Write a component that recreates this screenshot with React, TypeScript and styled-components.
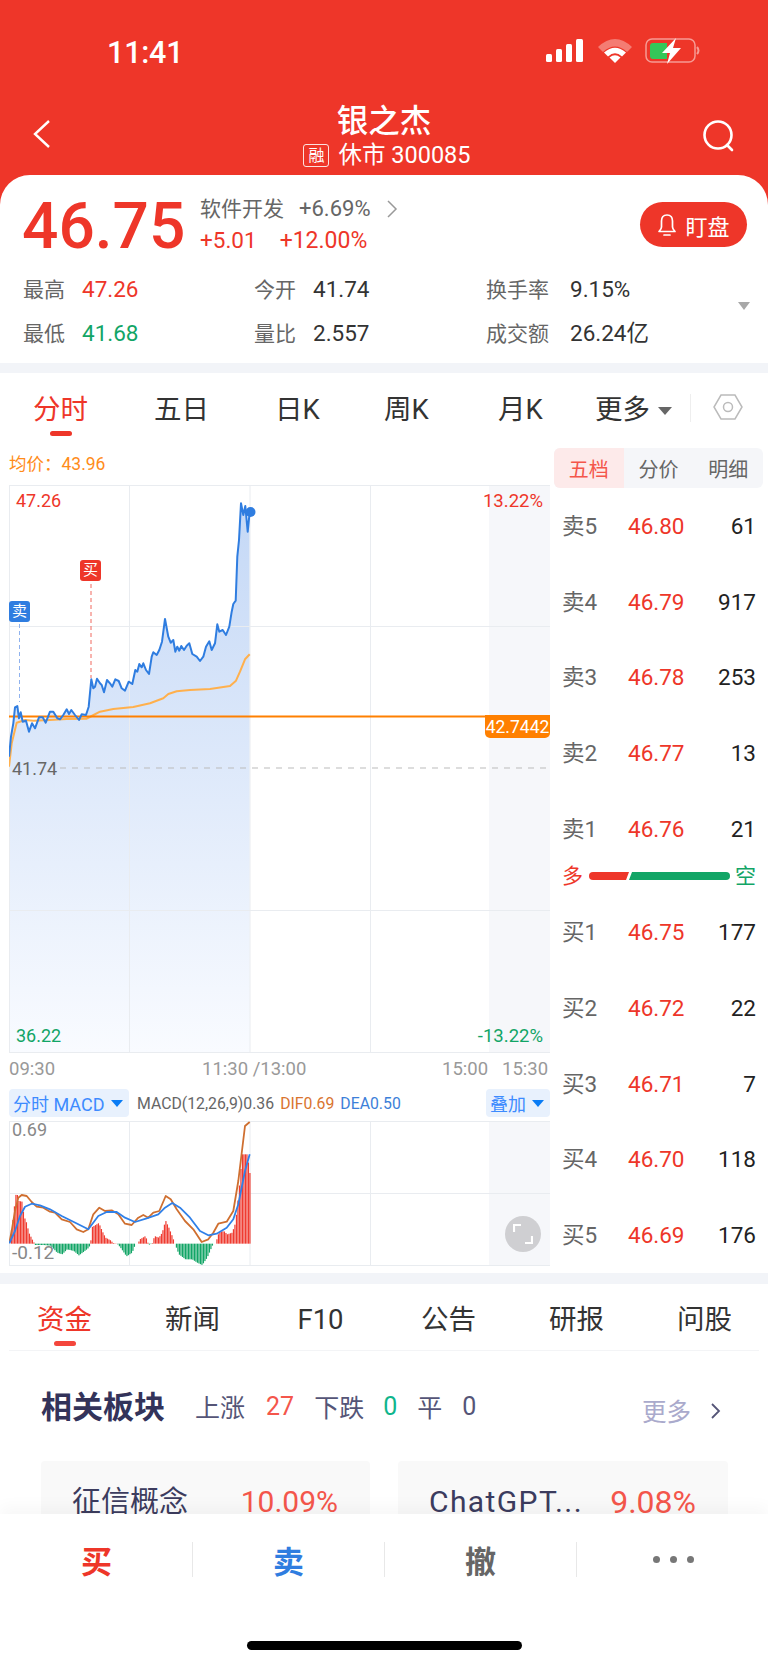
import styled, { createGlobalStyle } from 'styled-components';

const RED = '#ee3629';
const GREEN = '#12a566';
const BLUE = '#2f7de0';
const ORANGE = '#ff8000';
const GRID = '#e9ecf0';

const GlobalStyle = createGlobalStyle`
  html, body {
    margin: 0;
    padding: 0;
    background: #fff;
  }
  body {
    font-family: Roboto, "Noto Sans CJK SC", sans-serif;
  }
`;

const Page = styled.div`
  position: relative;
  width: 768px;
  height: 1665px;
  overflow: hidden;
  background: #fff;
`;

const TopSection = styled.div`
  background: ${RED};
`;

const StatusBar = styled.div`
  height: 103px;
  padding: 38px 68px 0 107px;
  box-sizing: border-box;
  display: flex;
  justify-content: space-between;
  align-items: flex-start;
`;

const Clock = styled.div`
  color: #fff;
  font-size: 30.5px;
  line-height: 29px;
  font-weight: 500;
  letter-spacing: -0.2px;
`;

const Nav = styled.div`
  height: 72px;
  padding: 0 32px;
  display: flex;
  justify-content: space-between;
  align-items: flex-start;
`;

const NavIcon = styled.svg`
  margin-top: 16px;
  display: block;
`;

const NavTitle = styled.div`
  display: flex;
  flex-direction: column;
  align-items: center;
  color: #fff;
`;

const StockName = styled.div`
  font-size: 31.5px;
  line-height: 36px;
  font-weight: 500;
  margin-top: 1px;
`;

const StockSub = styled.div`
  display: flex;
  align-items: center;
  gap: 9px;
  margin-left: 6px;
  font-size: 23.5px;
  line-height: 31px;
`;

const MarginBadge = styled.span`
  width: 24px;
  height: 21px;
  border: 1px solid rgba(255, 255, 255, 0.85);
  border-radius: 3px;
  font-size: 16px;
  line-height: 21px;
  text-align: center;
`;

const QuoteCard = styled.div`
  height: 188px;
  box-sizing: border-box;
  background: #fff;
  border-radius: 30px 30px 0 0;
  padding: 19px 21px 0 23px;
  position: relative;
`;

const QuoteTop = styled.div`
  display: flex;
  align-items: flex-start;
`;

const BigPrice = styled.div`
  width: 178px;
  color: ${RED};
  font-size: 64px;
  line-height: 64px;
  font-weight: 500;
  margin-left: -1px;
  margin-top: 1px;
`;

const QuoteMeta = styled.div`
  flex: 1;
  display: flex;
  flex-direction: column;
  gap: 6px;
  padding-top: 2px;
`;

const MetaRow = styled.div<{ $red?: boolean; $gap: number }>`
  display: flex;
  align-items: baseline;
  gap: ${(p) => p.$gap}px;
  font-size: 21px;
  line-height: 25px;
  color: ${(p) => (p.$red ? RED : '#666')};
`;

const MetaFigure = styled.span<{ $size: number }>`
  font-size: ${(p) => p.$size}px;
`;

const MetaChevron = styled.svg`
  align-self: center;
`;

const WatchButton = styled.div`
  width: 107px;
  height: 45px;
  margin-top: 8px;
  border-radius: 23px;
  background: ${RED};
  color: #fff;
  font-size: 22px;
  display: flex;
  align-items: center;
  justify-content: center;
  gap: 8px;
`;

const StatsGrid = styled.div`
  display: grid;
  grid-template-columns: 231px 232px 1fr;
  grid-auto-rows: 43.5px;
  margin-top: 15px;
`;

const Stat = styled.div`
  display: flex;
  align-items: baseline;
  font-size: 21px;
  line-height: 30px;
`;

const StatLabel = styled.span<{ $wide?: boolean }>`
  width: ${(p) => (p.$wide ? 84 : 59)}px;
  color: #666;
`;

const StatValue = styled.span<{ $color?: string }>`
  color: ${(p) => p.$color ?? '#333'};
  font-size: 22.5px;
`;

const ExpandArrow = styled.div`
  position: absolute;
  right: 18px;
  top: 127px;
  width: 0;
  height: 0;
  border-left: 6px solid transparent;
  border-right: 6px solid transparent;
  border-top: 8px solid #a8a8a8;
`;

const GapBand = styled.div<{ $height: number }>`
  height: ${(p) => p.$height}px;
  background: #f2f4f8;
`;

const PeriodTabs = styled.div`
  height: 67px;
  padding-left: 33px;
  display: grid;
  grid-template-columns: 121px 121px 109px 114px 97px 95px 1fr;
  align-items: start;
`;

const PeriodTab = styled.div<{ $active?: boolean }>`
  position: relative;
  margin-top: 20px;
  font-size: 27.5px;
  line-height: 34px;
  width: fit-content;
  color: ${(p) => (p.$active ? RED : '#333')};
  display: flex;
  align-items: center;
  &::after {
    content: '';
    display: ${(p) => (p.$active ? 'block' : 'none')};
    position: absolute;
    left: 17px;
    top: 38px;
    width: 22px;
    height: 5px;
    border-radius: 3px;
    background: ${RED};
  }
`;

const MoreCaret = styled.span`
  margin-left: 8px;
  margin-top: 2px;
  width: 0;
  height: 0;
  border-left: 7px solid transparent;
  border-right: 7px solid transparent;
  border-top: 8px solid #666;
`;

const SettingsSlot = styled.div`
  margin-top: 21px;
  height: 28px;
  border-left: 1px solid #eee;
  padding-left: 22px;
`;

const MainGrid = styled.div`
  display: grid;
  grid-template-columns: 550px 218px;
  height: 833px;
`;

const LeftColumn = styled.div`
  padding-left: 9px;
`;

const AvgLine = styled.div`
  height: 45px;
  display: flex;
  align-items: center;
  color: #ff8c1a;
  font-size: 17.5px;
  padding-left: 0;
`;

const ChartBox = styled.div<{ $height: number }>`
  position: relative;
  width: 541px;
  height: ${(p) => p.$height}px;
  svg {
    display: block;
  }
`;

const AxisLabel = styled.div<{ $x?: number; $rightX?: number; $y: number; $color: string; $size?: number }>`
  position: absolute;
  ${(p) => (p.$x !== undefined ? `left: ${p.$x}px;` : '')}
  ${(p) => (p.$rightX !== undefined ? `right: ${p.$rightX}px;` : '')}
  top: ${(p) => p.$y}px;
  color: ${(p) => p.$color};
  font-size: ${(p) => p.$size ?? 18}px;
  line-height: 20px;
`;

const Flag = styled.div<{ $x: number; $y: number; $bg: string }>`
  position: absolute;
  left: ${(p) => p.$x}px;
  top: ${(p) => p.$y}px;
  width: 21px;
  height: 21px;
  border-radius: 3px;
  background: ${(p) => p.$bg};
  color: #fff;
  font-size: 15px;
  line-height: 21px;
  text-align: center;
`;

const PriceTag = styled.div`
  position: absolute;
  right: 0;
  top: 230px;
  width: 65px;
  height: 23px;
  background: ${ORANGE};
  border-radius: 0 0 5px 5px;
  color: #fff;
  font-size: 17.5px;
  line-height: 24px;
  text-align: center;
`;

const TimeAxis = styled.div`
  height: 36px;
  padding: 0 0 5px 0;
  box-sizing: border-box;
  display: grid;
  grid-template-columns: 193px 240px 60px auto;
  align-items: center;
  color: #999;
  font-size: 18.5px;
`;

const MacdBar = styled.div`
  height: 28px;
  display: flex;
  align-items: center;
  margin-bottom: 4px;
  width: 541px;
  font-size: 15.8px;
  color: #666;
  white-space: nowrap;
`;

const MacdPill = styled.div<{ $width: number }>`
  width: ${(p) => p.$width}px;
  height: 28px;
  box-sizing: border-box;
  padding-left: 4px;
  border-radius: 4px;
  background: #e8f1fd;
  color: #3d8bff;
  font-size: 18px;
  display: flex;
  align-items: center;
  gap: 6px;
`;

const PillCaret = styled.span`
  width: 0;
  height: 0;
  border-left: 6px solid transparent;
  border-right: 6px solid transparent;
  border-top: 7px solid #0a7cf5;
`;

const MacdValue = styled.span<{ $color?: string; $left: number }>`
  margin-left: ${(p) => p.$left}px;
  color: ${(p) => p.$color ?? '#666'};
`;

const PushRight = styled.div`
  margin-left: auto;
`;

const ExpandButton = styled.div`
  position: absolute;
  left: 496px;
  top: 95px;
  width: 36px;
  height: 36px;
  border-radius: 50%;
  background: #cfcfd2;
  display: flex;
  align-items: center;
  justify-content: center;
`;

const RightColumn = styled.div`
  padding: 8px 0 0 4px;
`;

const BookTabs = styled.div`
  width: 209px;
  height: 40px;
  display: flex;
  border-radius: 6px;
  overflow: hidden;
  background: #f5f6f9;
  font-size: 20px;
`;

const BookTab = styled.div<{ $active?: boolean }>`
  flex: 1;
  display: flex;
  align-items: center;
  justify-content: center;
  color: ${(p) => (p.$active ? '#f4564b' : '#666')};
  background: ${(p) => (p.$active ? '#fdeaea' : 'transparent')};
`;

const Book = styled.div`
  padding: 0 12px 0 8px;
`;

const BookRow = styled.div`
  height: 75.7px;
  display: grid;
  grid-template-columns: 66px 1fr auto;
  align-content: center;
  align-items: baseline;
  font-size: 22.5px;
  line-height: 30px;
`;

const BookLabel = styled.span`
  color: #666;
  font-size: 22.5px;
`;

const BookPrice = styled.span`
  color: ${RED};
`;

const BookQty = styled.span`
  color: #222;
`;

const Balance = styled.div`
  height: 28px;
  display: flex;
  align-items: center;
  justify-content: space-between;
  font-size: 21px;
  line-height: 21px;
  margin-top: -4px;
  margin-bottom: 4px;
`;

const BalanceSide = styled.span<{ $color: string }>`
  color: ${(p) => p.$color};
`;

const BalanceTrack = styled.svg`
  display: block;
`;

const NewsTabs = styled.div`
  height: 67px;
  display: grid;
  grid-template-columns: repeat(6, 128px);
  padding-left: 0.5px;
  position: relative;
  &::after {
    content: '';
    position: absolute;
    left: 9px;
    right: 9px;
    bottom: 0;
    height: 1px;
    background: #f3f4f6;
  }
`;

const NewsTab = styled.div<{ $active?: boolean }>`
  position: relative;
  text-align: center;
  font-size: 27.5px;
  line-height: 36px;
  margin-top: 18px;
  height: 36px;
  color: ${(p) => (p.$active ? RED : '#333')};
  &::after {
    content: '';
    display: ${(p) => (p.$active ? 'block' : 'none')};
    position: absolute;
    left: 53px;
    top: 39px;
    width: 22px;
    height: 5px;
    border-radius: 3px;
    background: #f4463c;
  }
`;

const SectorHead = styled.div`
  margin-top: 38px;
  padding: 0 47px 0 41px;
  height: 34px;
  display: flex;
  align-items: center;
`;

const SectorTitle = styled.div`
  font-size: 31px;
  font-weight: 700;
  color: #33335a;
  margin-right: 30px;
  margin-top: -3px;
`;

const Count = styled.span<{ $color?: string; $left: number }>`
  margin-left: ${(p) => p.$left}px;
  font-size: 25px;
  color: ${(p) => p.$color ?? '#555577'};
`;

const SectorMore = styled.div`
  margin-left: auto;
  display: flex;
  align-items: center;
  gap: 18px;
  color: #aaaacc;
  font-size: 24.5px;
  padding-top: 9px;
`;

const SectorCards = styled.div`
  margin-top: 38px;
  padding: 0 40px 0 41px;
  display: grid;
  grid-template-columns: 329px 330px;
  gap: 28px;
`;

const SectorCard = styled.div`
  height: 110px;
  box-sizing: border-box;
  padding: 22px 32px 0 31px;
  background: #f9f9f9;
  border-radius: 4px;
  display: flex;
  justify-content: space-between;
  font-size: 29px;
  line-height: 38px;
  color: #3c3c5e;
`;

const SectorName = styled.span<{ $latin?: boolean }>`
  ${(p) => (p.$latin ? 'font-size: 30px; letter-spacing: 1.4px;' : '')}
`;

const SectorPct = styled.span<{ $size: number }>`
  color: #f4564b;
  font-size: ${(p) => p.$size}px;
`;

const BottomBar = styled.div`
  position: absolute;
  left: 0;
  right: 0;
  bottom: 0;
  height: 151px;
  background: #fff;
  box-shadow: 0 -8px 14px rgba(0, 0, 0, 0.03);
`;

const Actions = styled.div`
  display: grid;
  grid-template-columns: repeat(4, 192px);
  margin-top: 28px;
  padding-left: 1px;
`;

const Action = styled.div<{ $color: string; $last?: boolean }>`
  height: 35px;
  display: flex;
  align-items: center;
  justify-content: center;
  color: ${(p) => p.$color};
  font-size: 31px;
  font-weight: 700;
  border-right: ${(p) => (p.$last ? 'none' : '1px solid #e8e8e8')};
`;

const Dots = styled.div`
  display: flex;
  gap: 10px;
  margin-top: -1px;
`;

const Dot = styled.span`
  width: 7px;
  height: 7px;
  border-radius: 50%;
  background: #777;
`;

const HomeIndicator = styled.div`
  position: absolute;
  left: 247px;
  top: 127px;
  width: 275px;
  height: 9px;
  border-radius: 5px;
  background: #000;
`;

// points are read off the reference crops, 3x the page scale
type Pt = [number, number];

const priceLine: Pt[] = [
  [27, 830], [33, 770], [40, 730], [45, 682], [52, 678], [57, 715], [62, 697], [68, 725], [78, 722], [87, 755],
  [96, 730], [105, 745], [117, 712], [128, 712], [137, 728], [150, 695], [160, 695], [172, 715], [180, 718],
  [190, 705], [200, 688], [207, 702], [214, 690], [225, 705], [237, 720], [245, 703], [258, 705], [266, 680],
  [274, 598], [280, 625], [285, 620], [291, 596], [300, 610], [305, 615], [312, 637], [321, 600], [330, 610],
  [337, 620], [346, 598], [356, 603], [365, 625], [375, 632], [386, 605], [397, 612], [406, 570], [412, 575],
  [418, 552], [425, 562], [430, 550], [438, 570], [447, 582], [455, 530], [460, 517], [470, 525], [478, 510],
  [486, 485], [495, 417], [505, 470], [512, 488], [520, 480], [526, 515], [532, 500], [538, 512], [544, 498],
  [552, 510], [560, 497], [568, 490], [577, 522], [590, 530], [600, 543], [610, 530], [618, 500], [628, 484],
  [635, 510], [645, 490], [652, 433], [658, 455], [668, 450], [678, 465], [688, 440], [695, 395], [700, 372],
  [707, 362], [712, 230], [717, 180], [723, 70], [730, 105], [736, 78], [743, 155], [749, 96],
];

const avgLine: Pt[] = [
  [27, 860], [35, 790], [50, 728], [75, 720], [100, 722], [150, 720], [200, 717], [260, 716], [275, 708],
  [300, 695], [340, 687], [400, 681], [450, 670], [490, 655], [505, 642], [530, 634], [570, 630], [630, 627],
  [690, 618], [708, 602], [720, 575], [735, 538], [749, 523],
];

const macdHist: Pt[] = [
  [28, 608], [32, 570], [38, 530], [45, 462], [50, 460], [55, 480], [65, 482], [70, 525], [78, 545], [85, 575],
  [95, 595], [102, 608], [103, 612], [130, 612], [150, 614], [170, 635], [185, 640], [200, 625], [220, 630],
  [235, 643], [250, 632], [265, 620], [270, 608], [275, 558], [295, 546], [305, 570], [315, 590], [330, 598],
  [338, 606], [350, 608], [360, 620], [378, 646], [395, 635], [405, 608], [412, 608], [418, 595], [435, 585],
  [443, 608], [448, 612], [452, 608], [455, 608], [462, 585], [475, 590], [485, 575], [495, 538], [505, 560],
  [515, 585], [523, 608], [535, 640], [555, 655], [575, 655], [590, 665], [605, 672], [620, 650], [638, 608],
  [645, 608], [655, 575], [670, 570], [680, 580], [695, 575], [705, 545], [715, 450], [725, 340], [740, 340],
  [750, 410],
];

const difLine: Pt[] = [
  [28, 605], [35, 570], [45, 510], [55, 470], [65, 462], [80, 465], [95, 483], [110, 497], [130, 500], [150, 512],
  [165, 515], [185, 535], [210, 543], [230, 565], [250, 573], [265, 565], [280, 520], [298, 500], [315, 510],
  [335, 508], [355, 520], [375, 548], [395, 552], [415, 530], [430, 522], [445, 530], [460, 515], [478, 510],
  [497, 465], [512, 475], [530, 505], [555, 540], [580, 565], [605, 603], [625, 595], [640, 575], [655, 548],
  [680, 542], [700, 510], [715, 420], [735, 255], [749, 243],
];

const deaLine: Pt[] = [
  [28, 607], [45, 570], [60, 525], [75, 497], [95, 488], [120, 493], [150, 505], [185, 525], [220, 542], [265, 565],
  [295, 525], [320, 513], [350, 513], [375, 530], [405, 543], [440, 532], [475, 520], [495, 500], [517, 486],
  [540, 500], [570, 530], [600, 570], [625, 583], [650, 578], [680, 560], [700, 535], [715, 490], [735, 390],
  [749, 340],
];

const toSvg = (pts: Pt[], offsetY: number) =>
  pts.map(([x, y]) => `${(x / 3).toFixed(1)},${(y / 3 + offsetY).toFixed(1)}`).join(' ');

function histAt(x: number) {
  for (let i = 1; i < macdHist.length; i++) {
    const [x0, y0] = macdHist[i - 1];
    const [x1, y1] = macdHist[i];
    if (x <= x1) {
      return y0 + ((y1 - y0) * (x - x0)) / (x1 - x0 || 1);
    }
  }
  return 608;
}

function PriceChart() {
  const area = `9,768 ${toSvg(priceLine, 480)} 249.7,1052 9,1052`;
  return (
    <svg width="541" height="568" viewBox="9 485 541 568">
      <defs>
        <linearGradient id="priceFill" gradientUnits="userSpaceOnUse" x1="0" y1="500" x2="0" y2="1052">
          <stop offset="0" stopColor="#c4d8f6" />
          <stop offset="1" stopColor="#f9fbff" />
        </linearGradient>
      </defs>
      <rect x="489" y="485" width="61" height="568" fill="#f6f7fa" />
      <polygon points={area} fill="url(#priceFill)" />
      {[485.5, 626.5, 910.5, 1052.5].map((y) => (
        <line key={y} x1="9" x2="550" y1={y} y2={y} stroke={GRID} />
      ))}
      {[9.5, 129.5, 250, 370.5].map((x) => (
        <line key={x} x1={x} x2={x} y1="485" y2="1053" stroke={GRID} />
      ))}
      <line x1="60" x2="550" y1="768" y2="768" stroke="#bbb" strokeDasharray="6 6" />
      <line x1="19.5" x2="19.5" y1="624" y2="702" stroke="#8fb2ee" strokeDasharray="4 3" />
      <line x1="91" x2="91" y1="584" y2="678" stroke="#f0685e" strokeDasharray="4 3" />
      <polyline points={toSvg(avgLine, 480)} fill="none" stroke="#ffb04d" strokeWidth="2" strokeLinejoin="round" />
      <line x1="9" x2="490" y1="716.5" y2="716.5" stroke={ORANGE} strokeWidth="2" />
      <polyline points={toSvg(priceLine, 480)} fill="none" stroke={BLUE} strokeWidth="2" strokeLinejoin="round" />
      <circle cx="250.5" cy="512" r="5" fill={BLUE} />
    </svg>
  );
}

function MacdChart() {
  const bars = [];
  for (let x = 28; x <= 750; x += 4.5) {
    const top = histAt(x);
    bars.push(
      <rect
        key={x}
        x={x / 3}
        y={Math.min(top, 608) / 3 + 1040}
        width="1.2"
        height={Math.abs(top - 608) / 3}
        fill={top < 608 ? '#ef3b30' : GREEN}
      />,
    );
  }
  return (
    <svg width="541" height="145" viewBox="9 1120 541 145">
      <rect x="489" y="1120" width="61" height="145" fill="#f6f7fa" />
      {[1120.5, 1192.5, 1264.5].map((y) => (
        <line key={y} x1="9" x2="550" y1={y} y2={y} stroke={GRID} />
      ))}
      {[9.5, 129.5, 250, 370.5].map((x) => (
        <line key={x} x1={x} x2={x} y1="1120" y2="1265" stroke={GRID} />
      ))}
      {bars}
      <polyline points={toSvg(difLine, 1040)} fill="none" stroke="#cf6f30" strokeWidth="1.8" strokeLinejoin="round" />
      <polyline points={toSvg(deaLine, 1040)} fill="none" stroke="#3080e8" strokeWidth="1.8" strokeLinejoin="round" />
    </svg>
  );
}

const sells = [
  ['卖5', '46.80', '61'],
  ['卖4', '46.79', '917'],
  ['卖3', '46.78', '253'],
  ['卖2', '46.77', '13'],
  ['卖1', '46.76', '21'],
];

const buys = [
  ['买1', '46.75', '177'],
  ['买2', '46.72', '22'],
  ['买3', '46.71', '7'],
  ['买4', '46.70', '118'],
  ['买5', '46.69', '176'],
];

function BookRows({ rows }: { rows: string[][] }) {
  return (
    <>
      {rows.map(([label, price, qty]) => (
        <BookRow key={label}>
          <BookLabel>{label}</BookLabel>
          <BookPrice>{price}</BookPrice>
          <BookQty>{qty}</BookQty>
        </BookRow>
      ))}
    </>
  );
}

function StatusIcons() {
  return (
    <svg width="154" height="26" viewBox="546 39 154 26">
      <rect x="546" y="55" width="6" height="8" rx="1.5" fill="#fff" />
      <rect x="556" y="50" width="6" height="13" rx="1.5" fill="#fff" />
      <rect x="566" y="45" width="6" height="18" rx="1.5" fill="#fff" />
      <rect x="576" y="40" width="7" height="23" rx="1.5" fill="#fff" />
      <path d="M598 48 Q615 32 632 48 L627 53 Q615 42 603 53 Z" fill="#fff" opacity="0.35" />
      <path d="M604 53.5 Q615 44 626 53.5 L622 57.5 Q615 51 608 57.5 Z" fill="#fff" />
      <path d="M609.5 58.5 Q615 54 620.5 58.5 L615 64 Z" fill="#fff" />
      <rect x="646" y="40" width="49" height="23" rx="6" fill="none" stroke="#fff" strokeOpacity="0.5" strokeWidth="1.5" />
      <path d="M650 47 a3 3 0 0 1 3 -3 H667 V60 H653 a3 3 0 0 1 -3 -3 Z" fill="#34c759" />
      <path d="M697 48 q3 3.5 0 7" fill="none" stroke="#fff" strokeOpacity="0.5" strokeWidth="2" />
      <path d="M676 39 L662 54 H670 L667 65 L681 49 H673 Z" fill="#fff" />
    </svg>
  );
}

function App() {
  return (
    <Page>
      <GlobalStyle />
      <TopSection>
        <StatusBar>
          <Clock>11:41</Clock>
          <StatusIcons />
        </StatusBar>
        <Nav>
          <NavIcon width="34" height="30" viewBox="0 0 34 30">
            <path d="M17 2 L3 15 L17 28" fill="none" stroke="#fff" strokeWidth="2.4" />
          </NavIcon>
          <NavTitle>
            <StockName>银之杰</StockName>
            <StockSub>
              <MarginBadge>融</MarginBadge>
              休市 300085
            </StockSub>
          </NavTitle>
          <NavIcon width="34" height="34" viewBox="0 0 34 34">
            <circle cx="16" cy="16" r="13.5" fill="none" stroke="#fff" strokeWidth="2.6" />
            <path d="M25 26 L30 31" stroke="#fff" strokeWidth="2.6" strokeLinecap="round" />
          </NavIcon>
        </Nav>
        <QuoteCard>
          <QuoteTop>
            <BigPrice>46.75</BigPrice>
            <QuoteMeta>
              <MetaRow $gap={15}>
                <span>软件开发</span>
                <MetaFigure $size={22}>+6.69%</MetaFigure>
                <MetaChevron width="12" height="18" viewBox="0 0 12 18">
                  <path d="M2 1 L10 9 L2 17" fill="none" stroke="#999" strokeWidth="1.5" />
                </MetaChevron>
              </MetaRow>
              <MetaRow $red $gap={23}>
                <MetaFigure $size={22.5}>+5.01</MetaFigure>
                <MetaFigure $size={23}>+12.00%</MetaFigure>
              </MetaRow>
            </QuoteMeta>
            <WatchButton>
              <svg width="20" height="24" viewBox="0 0 20 24">
                <path
                  d="M10 2 C6 2 4.5 5 4.5 8 V14 C4.5 16 3.5 17 2 18.5 H18 C16.5 17 15.5 16 15.5 14 V8 C15.5 5 14 2 10 2 Z M7 22 H13"
                  fill="none"
                  stroke="#fff"
                  strokeWidth="1.7"
                  strokeLinejoin="round"
                  strokeLinecap="round"
                />
              </svg>
              盯盘
            </WatchButton>
          </QuoteTop>
          <StatsGrid>
            <Stat>
              <StatLabel>最高</StatLabel>
              <StatValue $color={RED}>47.26</StatValue>
            </Stat>
            <Stat>
              <StatLabel>今开</StatLabel>
              <StatValue>41.74</StatValue>
            </Stat>
            <Stat>
              <StatLabel $wide>换手率</StatLabel>
              <StatValue>9.15%</StatValue>
            </Stat>
            <Stat>
              <StatLabel>最低</StatLabel>
              <StatValue $color={GREEN}>41.68</StatValue>
            </Stat>
            <Stat>
              <StatLabel>量比</StatLabel>
              <StatValue>2.557</StatValue>
            </Stat>
            <Stat>
              <StatLabel $wide>成交额</StatLabel>
              <StatValue>26.24亿</StatValue>
            </Stat>
          </StatsGrid>
          <ExpandArrow />
        </QuoteCard>
      </TopSection>
      <GapBand $height={10} />

      <PeriodTabs>
        <PeriodTab $active>分时</PeriodTab>
        <PeriodTab>五日</PeriodTab>
        <PeriodTab>日K</PeriodTab>
        <PeriodTab>周K</PeriodTab>
        <PeriodTab>月K</PeriodTab>
        <PeriodTab>
          更多
          <MoreCaret />
        </PeriodTab>
        <SettingsSlot>
          <svg width="30" height="26" viewBox="0 0 30 26">
            <path d="M8 1 H22 L29 13 L22 25 H8 L1 13 Z" fill="none" stroke="#bbb" strokeWidth="1.5" />
            <circle cx="15" cy="13" r="4.5" fill="none" stroke="#bbb" strokeWidth="1.5" />
          </svg>
        </SettingsSlot>
      </PeriodTabs>

      <MainGrid>
        <LeftColumn>
          <AvgLine>均价：43.96</AvgLine>
          <ChartBox $height={568}>
            <PriceChart />
            <AxisLabel $x={7} $y={6} $color={RED}>47.26</AxisLabel>
            <AxisLabel $rightX={7} $y={6} $color={RED} $size={18.5}>13.22%</AxisLabel>
            <AxisLabel $x={3} $y={274} $color="#666">41.74</AxisLabel>
            <AxisLabel $x={7} $y={541} $color={GREEN}>36.22</AxisLabel>
            <AxisLabel $rightX={7} $y={541} $color={GREEN} $size={18.5}>-13.22%</AxisLabel>
            <Flag $x={0} $y={116} $bg={BLUE}>卖</Flag>
            <Flag $x={71} $y={75} $bg={RED}>买</Flag>
            <PriceTag>42.7442</PriceTag>
          </ChartBox>
          <TimeAxis>
            <span>09:30</span>
            <span>11:30 /13:00</span>
            <span>15:00</span>
            <span>15:30</span>
          </TimeAxis>
          <MacdBar>
            <MacdPill $width={120}>
              分时 MACD
              <PillCaret />
            </MacdPill>
            <MacdValue $left={8}>MACD(12,26,9)0.36</MacdValue>
            <MacdValue $left={6} $color="#d9742f">DIF0.69</MacdValue>
            <MacdValue $left={6} $color="#3d7fd9">DEA0.50</MacdValue>
            <PushRight>
              <MacdPill $width={64}>
                叠加
                <PillCaret />
              </MacdPill>
            </PushRight>
          </MacdBar>
          <ChartBox $height={145}>
            <MacdChart />
            <AxisLabel $x={3} $y={-1} $color="#888">0.69</AxisLabel>
            <AxisLabel $x={3} $y={122} $color="#888" $size={19}>-0.12</AxisLabel>
            <ExpandButton>
              <svg width="20" height="20" viewBox="0 0 20 20">
                <path d="M1 8 V1 H8 M12 19 H19 V12" fill="none" stroke="#fff" strokeWidth="2.2" />
              </svg>
            </ExpandButton>
          </ChartBox>
        </LeftColumn>
        <RightColumn>
          <BookTabs>
            <BookTab $active>五档</BookTab>
            <BookTab>分价</BookTab>
            <BookTab>明细</BookTab>
          </BookTabs>
          <Book>
            <BookRows rows={sells} />
            <Balance>
              <BalanceSide $color={RED}>多</BalanceSide>
              <BalanceTrack width="141" height="8" viewBox="0 0 141 8">
                <path d="M4 0 H40 L37 8 H4 a4 4 0 0 1 0 -8 Z" fill={RED} />
                <path d="M43 0 H137 a4 4 0 0 1 0 8 H40 Z" fill={GREEN} />
              </BalanceTrack>
              <BalanceSide $color={GREEN}>空</BalanceSide>
            </Balance>
            <BookRows rows={buys} />
          </Book>
        </RightColumn>
      </MainGrid>
      <GapBand $height={11} />

      <NewsTabs>
        <NewsTab $active>资金</NewsTab>
        <NewsTab>新闻</NewsTab>
        <NewsTab>F10</NewsTab>
        <NewsTab>公告</NewsTab>
        <NewsTab>研报</NewsTab>
        <NewsTab>问股</NewsTab>
      </NewsTabs>

      <SectorHead>
        <SectorTitle>相关板块</SectorTitle>
        <Count $left={0}>上涨</Count>
        <Count $left={21} $color="#f4564b">27</Count>
        <Count $left={20}>下跌</Count>
        <Count $left={19} $color="#0fb58c">0</Count>
        <Count $left={20}>平</Count>
        <Count $left={20}>0</Count>
        <SectorMore>
          更多
          <svg width="12" height="18" viewBox="0 0 12 18">
            <path d="M3 2 L10 9 L3 16" fill="none" stroke="#555577" strokeWidth="1.8" />
          </svg>
        </SectorMore>
      </SectorHead>
      <SectorCards>
        <SectorCard>
          <SectorName>征信概念</SectorName>
          <SectorPct $size={30}>10.09%</SectorPct>
        </SectorCard>
        <SectorCard>
          <SectorName $latin>ChatGPT...</SectorName>
          <SectorPct $size={32}>9.08%</SectorPct>
        </SectorCard>
      </SectorCards>

      <BottomBar>
        <Actions>
          <Action $color={RED}>买</Action>
          <Action $color={BLUE}>卖</Action>
          <Action $color="#666">撤</Action>
          <Action $color="#777" $last>
            <Dots>
              <Dot />
              <Dot />
              <Dot />
            </Dots>
          </Action>
        </Actions>
        <HomeIndicator />
      </BottomBar>
    </Page>
  );
}

export default App;
